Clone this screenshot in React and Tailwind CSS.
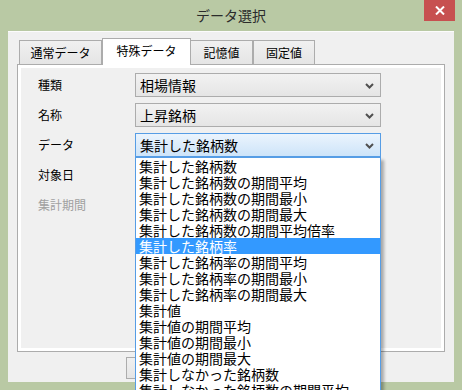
import React from 'react';

const font = { fontFamily: '"Noto Sans CJK JP", "Noto Sans", sans-serif' };

const items = [
  '集計した銘柄数',
  '集計した銘柄数の期間平均',
  '集計した銘柄数の期間最小',
  '集計した銘柄数の期間最大',
  '集計した銘柄数の期間平均倍率',
  '集計した銘柄率',
  '集計した銘柄率の期間平均',
  '集計した銘柄率の期間最小',
  '集計した銘柄率の期間最大',
  '集計値',
  '集計値の期間平均',
  '集計値の期間最小',
  '集計値の期間最大',
  '集計しなかった銘柄数',
  '集計しなかった銘柄数の期間平均',
];

function Chevron() {
  return (
    <svg width="9" height="6" viewBox="0 0 9 6" className="absolute right-[6px] top-[9px]">
      <path d="M1 1 L4.5 4.5 L8 1" fill="none" stroke="#505050" strokeWidth="2" />
    </svg>
  );
}

function Combo({ value, open }) {
  return (
    <div
      className={
        'relative w-[246px] h-[24px] border pl-[4px] text-[14px] leading-[22px] text-black ' +
        (open
          ? 'border-[#569de5] bg-gradient-to-b from-[#ebf4fd] to-[#cde4f9]'
          : 'border-[#acacac] bg-gradient-to-b from-[#f2f2f2] to-[#e5e5e5]')
      }
    >
      {value}
      <Chevron />
    </div>
  );
}

function Row({ label, gray, children }) {
  return (
    <div className="flex items-center h-[24px]">
      <div className={'w-[97px] text-[12px] leading-[16px] ' + (gray ? 'text-[#a0a0a0]' : 'text-black')}>{label}</div>
      {children}
    </div>
  );
}

export default function App() {
  return (
    <div className="w-[462px] h-[390px] overflow-hidden bg-[#b9c9a4] relative" style={font}>
      {/* タイトルバー */}
      <div className="h-[31px] relative flex items-center justify-center">
        <span className="text-[14px] text-[#2b2b2b] leading-none mt-[-1px]">データ選択</span>
        <div className="absolute right-[7px] top-0 w-[31px] h-[21px] bg-[#c75050] flex items-center justify-center">
          <svg width="10" height="9" viewBox="0 0 10 9">
            <path d="M1 0.5 L9 8.5 M9 0.5 L1 8.5" stroke="#fff" strokeWidth="2" />
          </svg>
        </div>
      </div>

      {/* クライアント */}
      <div className="ml-[8px] w-[446px] h-[351px] bg-[#f0f0f0] border-t border-[#fcfcfc] relative">
        {/* タブ */}
        <div className="flex items-end pl-[11px] pt-[5px] h-[32px] text-[12px] leading-[16px] text-black">
          <div className="w-[83px] h-[24px] border border-[#acacac] border-b-0 bg-gradient-to-b from-[#f0f0f0] to-[#e5e5e5] flex items-center justify-center">通常データ</div>
          <div className="w-[89px] h-[27px] border border-[#acacac] border-b-0 bg-white flex items-center justify-center pb-[3px] relative z-10 mb-[-1px]">特殊データ</div>
          <div className="w-[62px] h-[24px] border border-[#acacac] border-b-0 border-l-0 bg-gradient-to-b from-[#f0f0f0] to-[#e5e5e5] flex items-center justify-center">記憶値</div>
          <div className="w-[62px] h-[24px] border border-[#acacac] border-b-0 bg-gradient-to-b from-[#f0f0f0] to-[#e5e5e5] flex items-center justify-center">固定値</div>
        </div>

        {/* パネル */}
        <div className="ml-[9px] w-[428px] h-[288px] border border-[#acacac] bg-white p-[3px]">
          <div className="w-full h-full bg-[#f0f0f0] pl-[17px] pt-[5px] flex flex-col gap-[6px]">
            <Row label="種類"><Combo value="相場情報" /></Row>
            <Row label="名称"><Combo value="上昇銘柄" /></Row>
            <Row label="データ"><Combo value="集計した銘柄数" open /></Row>
            <Row label="対象日">
              <div className="w-[246px] h-[24px] border border-[#acacac] bg-white relative">
                <span className="absolute right-[-1px] top-[3px] text-[12px] leading-[16px]">)</span>
              </div>
            </Row>
            <Row label="集計期間" gray />
          </div>
        </div>

        {/* ボタン（一覧の下に隠れている） */}
        <div className="flex gap-[8px] ml-[118px] mt-[5px]">
          <div className="w-[75px] h-[22px] border border-[#acacac] bg-gradient-to-b from-[#f0f0f0] to-[#e5e5e5]" />
          <div className="w-[75px] h-[22px] border border-[#acacac] bg-gradient-to-b from-[#f0f0f0] to-[#e5e5e5]" />
        </div>
      </div>

      {/* ドロップダウン一覧 */}
      <div className="absolute left-[135px] top-[157px] w-[246px] bg-white border border-[#569de5] shadow-[3px_3px_3px_rgba(0,0,0,0.3)] text-[14px] leading-[16px]">
        {items.map((t, i) => (
          <div key={i} className={'h-[16px] pl-[3px] whitespace-nowrap ' + (i === 5 ? 'bg-[#3399ff] text-white' : 'text-black')}>
            {t}
          </div>
        ))}
      </div>
    </div>
  );
}
